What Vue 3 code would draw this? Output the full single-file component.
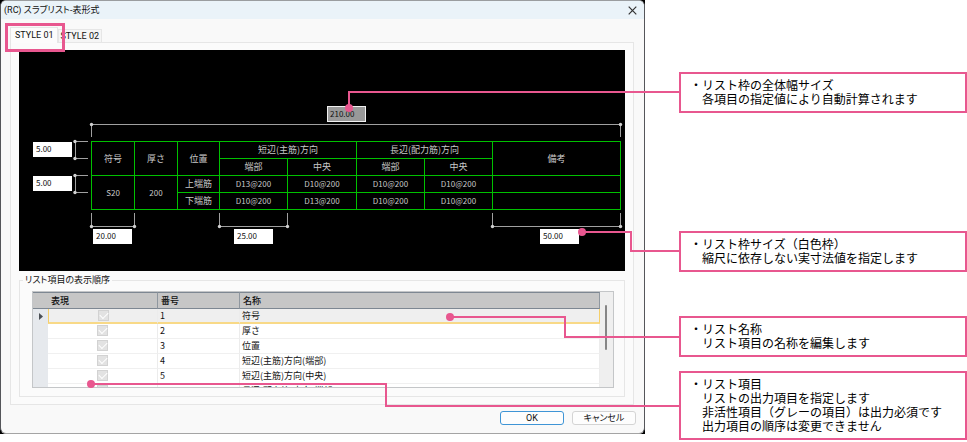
<script setup>
import { ref } from 'vue'

const tabs = ['STYLE 01', 'STYLE 02']
const activeTab = ref(0)

const sizes = [
  { id: 'total', label: '全体幅', value: '210.00', readonly: true },
  { id: 'head', label: '見出し行の高さ', value: '5.00' },
  { id: 'row', label: 'データ行の高さ', value: '5.00' },
  { id: 'mark', label: '符号の幅', value: '20.00' },
  { id: 'bar', label: '配筋の幅', value: '25.00' },
  { id: 'remark', label: '備考の幅', value: '50.00' },
]

const dimensionLines = [
  'M72.5 87V74.5H601.5V87',
  'M69 91.5H56.5V108.5H69',
  'M69 125.5H56.5V142.5H69',
  'M72.5 163V176.5H115.5V163',
  'M200.5 163V176.5H268.5V163',
  'M473.5 163V176.5H601.5V163',
]
const dimensionDots = [
  [72.5, 74.5], [601.5, 74.5],
  [56, 91.5], [56, 108.5], [56, 125.5], [56, 142.5],
  [72.5, 176.5], [115.5, 176.5], [200.5, 176.5], [268.5, 176.5],
  [473.5, 176.5], [601.5, 176.5],
]

const columnWidths = [43, 43, 42, 68, 69, 68, 68, 128]

const items = ['符号', '厚さ', '位置', '短辺(主筋)方向(端部)', '短辺(主筋)方向(中央)', '長辺(配力筋)方向(端部)']

const notes = [
  { id: 'width', title: 'リスト枠の全体幅サイズ', lines: ['各項目の指定値により自動計算されます'] },
  { id: 'size', title: 'リスト枠サイズ（白色枠）', lines: ['縮尺に依存しない実寸法値を指定します'] },
  { id: 'name', title: 'リスト名称', lines: ['リスト項目の名称を編集します'] },
  {
    id: 'item',
    title: 'リスト項目',
    lines: ['リストの出力項目を指定します', '非活性項目（グレーの項目）は出力必須です', '出力項目の順序は変更できません'],
  },
]

const leaders = [
  { dot: [349, 108], path: 'M349 108V92H680' },
  { dot: [582, 232], path: 'M582 232H631V251H680' },
  { dot: [450, 317], path: 'M450 317H565V337H680' },
  { dot: [91, 384], path: 'M91 384H386V406H680' },
]
</script>

<template>
  <main class="page">
    <div class="window">
      <section class="dialog">
        <header class="titlebar">
          <h1>(RC) スラブリスト-表形式</h1>
          <button class="close" type="button" aria-label="閉じる">
            <svg viewBox="0 0 9 9"><path d="M0.7 0.7L8.3 8.3M8.3 0.7L0.7 8.3" /></svg>
          </button>
        </header>

        <div class="body">
          <nav class="tabs">
            <button
              v-for="(tab, i) in tabs"
              :key="tab"
              type="button"
              class="tab"
              :class="{ active: i === activeTab }"
              @click="activeTab = i"
            >{{ tab }}</button>
          </nav>

          <div class="panel">
            <div class="canvas">
              <table class="slab">
                <colgroup>
                  <col v-for="(w, i) in columnWidths" :key="i" :style="{ width: w + 'px' }">
                </colgroup>
                <tbody>
                  <tr>
                    <th rowspan="2">符号</th>
                    <th rowspan="2">厚さ</th>
                    <th rowspan="2">位置</th>
                    <th colspan="2">短辺(主筋)方向</th>
                    <th colspan="2">長辺(配力筋)方向</th>
                    <th rowspan="2">備考</th>
                  </tr>
                  <tr><th>端部</th><th>中央</th><th>端部</th><th>中央</th></tr>
                  <tr>
                    <td rowspan="2">S20</td>
                    <td rowspan="2">200</td>
                    <th>上端筋</th><td>D13@200</td><td>D10@200</td><td>D10@200</td><td>D10@200</td><td></td>
                  </tr>
                  <tr><th>下端筋</th><td>D10@200</td><td>D13@200</td><td>D10@200</td><td>D10@200</td><td></td></tr>
                </tbody>
              </table>
              <svg class="dimensions" viewBox="0 0 606 221" preserveAspectRatio="none" aria-hidden="true">
                <path v-for="d in dimensionLines" :key="d" :d="d" />
                <circle v-for="(c, i) in dimensionDots" :key="i" :cx="c[0]" :cy="c[1]" r="1.7" />
              </svg>
              <input
                v-for="s in sizes"
                :key="s.id"
                v-model="s.value"
                class="size"
                :class="'size-' + s.id"
                type="text"
                :aria-label="s.label"
                :readonly="s.readonly"
              >
            </div>

            <fieldset class="order">
              <legend>リスト項目の表示順序</legend>
              <div class="grid">
                <div class="rows">
                  <table class="items">
                    <colgroup><col class="c-mark"><col class="c-show"><col class="c-no"><col></colgroup>
                    <thead>
                      <tr><th colspan="2" class="h-show">表現</th><th>番号</th><th>名称</th></tr>
                    </thead>
                    <tbody>
                      <tr v-for="(item, i) in items" :key="item" :class="{ current: i === 0 }">
                        <td class="mark"><svg v-if="i === 0" viewBox="0 0 4 7"><path d="M0 0L4 3.5L0 7Z" /></svg></td>
                        <td class="show"><input type="checkbox" checked disabled :aria-label="item"></td>
                        <td>{{ i + 1 }}</td>
                        <td>{{ item }}</td>
                      </tr>
                    </tbody>
                  </table>
                </div>
                <div class="scrollbar"><span class="thumb"></span></div>
              </div>
            </fieldset>
          </div>
        </div>

        <footer class="actions">
          <button type="button" class="action primary">OK</button>
          <button type="button" class="action">キャンセル</button>
        </footer>
      </section>
    </div>

    <aside class="notes">
      <section v-for="n in notes" :key="n.id" class="note" :class="'note-' + n.id">
        <p>・{{ n.title }}</p>
        <p v-for="l in n.lines" :key="l" class="line">{{ l }}</p>
      </section>
    </aside>

    <svg class="leaders" viewBox="0 0 967 442" preserveAspectRatio="none" aria-hidden="true">
      <rect x="6.5" y="24.5" width="57" height="26" />
      <g v-for="l in leaders" :key="l.path">
        <path :d="l.path" />
        <circle :cx="l.dot[0]" :cy="l.dot[1]" r="4" />
      </g>
    </svg>
  </main>
</template>

<style>
body {
  margin: 0;
  background: #fff;
}
</style>

<style scoped>
* {
  box-sizing: border-box;
}

.page {
  position: relative;
  display: grid;
  grid-template-columns: minmax(0, 645fr) minmax(0, 288fr);
  column-gap: 34px;
  align-items: start;
  padding-bottom: 2px;
  font-family: "Noto Sans CJK JP", sans-serif;
  font-size: 9px;
  line-height: 12px;
  color: #111;
}

button,
input {
  font: inherit;
  color: inherit;
}

.window {
  background: #000;
}

.dialog {
  border: 1px solid #55565a;
  border-top-color: #9a9da0;
  border-bottom-color: #a4a4a4;
  border-radius: 6px;
  background: #f9f9f9;
  overflow: hidden;
}

.titlebar {
  display: flex;
  align-items: center;
  justify-content: space-between;
  height: 18px;
  padding: 0 7px 0 3px;
  background: #eaf3f9;
}

h1 {
  margin: 0;
  font: 400 9px/14px Roboto, "Noto Sans CJK JP", sans-serif;
  font-feature-settings: "palt";
}

.close {
  display: flex;
  padding: 0;
  border: 0;
  background: none;
}

.close svg {
  width: 9px;
  height: 9px;
  fill: none;
  stroke: #333;
  stroke-width: 1.2;
}

.body {
  padding: 8px 10px 0 9px;
}

.tabs {
  display: flex;
  align-items: flex-end;
}

.tab {
  height: 13px;
  padding: 0 2px;
  border: 1px solid #e6e6e6;
  border-bottom: 0;
  background: #f5f5f5;
  font: 9px/12px Roboto, sans-serif;
}

.tab.active {
  height: 16px;
  margin-bottom: -1px;
  padding: 0 3px 2px 4px;
  background: #fcfcfc;
}

.panel {
  padding: 7px 8px;
  border: 1px solid #e6e6e6;
  background: #fbfbfb;
}

.canvas {
  position: relative;
  padding: 91px 4px 61px 72px;
  background: #000;
}

.slab {
  width: 100%;
  table-layout: fixed;
  border-collapse: collapse;
  color: #c8c8c8;
  text-align: center;
}

.slab tr {
  height: 17px;
}

.slab th,
.slab td {
  padding: 0;
  border: 1px solid #00c000;
  font-weight: 400;
  white-space: nowrap;
}

.slab td {
  font-size: 8px;
}

.dimensions {
  position: absolute;
  inset: 0;
  width: 100%;
  height: 100%;
  fill: none;
  stroke: #a0a0a0;
}

.dimensions circle {
  fill: #d0d0d0;
  stroke: none;
}

.size {
  position: absolute;
  width: 39px;
  height: 15px;
  padding: 0 3px 2px;
  border: 0;
  background: #fff;
  font-size: 8px;
}

.size-total {
  left: 308px;
  top: 56px;
  height: 16px;
  padding: 0 2px 2px;
  border: 1px solid #f0f0f0;
  background: #999;
}

.size-head {
  left: 14px;
  top: 92px;
}

.size-row {
  left: 14px;
  top: 126px;
}

.size-mark {
  left: 74px;
  top: 179px;
}

.size-bar {
  left: 215px;
  top: 179px;
}

.size-remark {
  left: 521px;
  top: 179px;
}

.order {
  min-width: 0;
  margin: 3px 0 0;
  padding: 5px 10px 8px 12px;
  border: 1px solid #e6e6e6;
}

legend {
  margin-left: -9px;
  padding: 0 2px;
  font-feature-settings: "palt";
}

.grid {
  display: flex;
  height: 97px;
  border: 1px solid #c4c6c8;
  background: #fff;
}

.rows {
  flex: 1;
  overflow: hidden;
}

.scrollbar {
  width: 13px;
  padding-top: 13px;
  background: #efefef;
}

.thumb {
  display: block;
  width: 2px;
  height: 45px;
  margin-left: 5px;
  border-radius: 1px;
  background: #868686;
}

.items {
  width: 100%;
  table-layout: fixed;
  border-collapse: separate;
  border-spacing: 0;
}

.c-mark {
  width: 15px;
}

.c-show {
  width: 110px;
}

.c-no {
  width: 82px;
}

.items th {
  height: 17px;
  padding: 0 3px;
  border-top: 1px solid #7d8792;
  border-bottom: 1px solid #7d8792;
  border-right: 1px solid #8f979f;
  background: #c6c6c6;
  font-weight: 500;
  text-align: left;
}

.items .h-show {
  padding-left: 18px;
}

.items td {
  height: 15px;
  padding: 0 2px 1px;
  border-right: 1px solid #ececec;
  border-bottom: 1px solid #f0f0f0;
  white-space: nowrap;
}

.items .mark {
  padding: 0;
  border: 0;
  background: #e6e9ed;
}

.mark svg {
  display: block;
  width: 4px;
  height: 7px;
  margin-left: 6px;
  fill: #4a4f55;
}

.items .current td:not(.mark) {
  padding-bottom: 0;
  border-bottom: 2px solid #f8d987;
  background: #efefef;
}

.items .current .show {
  border-left: 1px solid #f5cf6a;
}

.items .current td:last-child {
  border-right: 1px solid #f5cf6a;
}

.show input {
  position: relative;
  display: block;
  width: 11px;
  height: 11px;
  margin: 0 auto;
  appearance: none;
  border: 1px solid #d2d2d2;
  background: #e2e2e2;
}

.show input:checked::after {
  content: "";
  position: absolute;
  left: 1px;
  top: 1px;
  width: 7px;
  height: 4px;
  border-left: 1px solid #fff;
  border-bottom: 1px solid #fff;
  transform: rotate(-45deg);
}

.actions {
  display: flex;
  justify-content: flex-end;
  gap: 8px;
  padding: 6px 8px 8px;
}

.action {
  width: 64px;
  height: 14px;
  padding: 0;
  border: 1px solid #d4d4d4;
  border-radius: 3px;
  background: #fdfdfd;
  font: 9px/12px Roboto, "Noto Sans CJK JP", sans-serif;
  font-feature-settings: "palt";
}

.primary {
  border-color: #3f95d6;
}

.notes {
  padding-top: 72px;
  font: 12px/14px "Noto Sans CJK JP", sans-serif;
  color: #000;
}

.note {
  padding: 4px 9px 5px;
  border: 2px solid #e8578f;
  background: #fff;
}

.note p {
  margin: 0;
}

.note .line {
  padding-left: 12px;
}

.note-size {
  margin-top: 118px;
}

.note-name {
  margin-top: 44px;
}

.note-item {
  margin-top: 14px;
}

.leaders {
  position: absolute;
  inset: 0;
  width: 100%;
  height: 100%;
  fill: none;
  stroke: #e8578f;
  stroke-width: 2;
  pointer-events: none;
}

.leaders rect {
  stroke-width: 3;
}

.leaders circle {
  fill: #e8578f;
  stroke: none;
}
</style>
